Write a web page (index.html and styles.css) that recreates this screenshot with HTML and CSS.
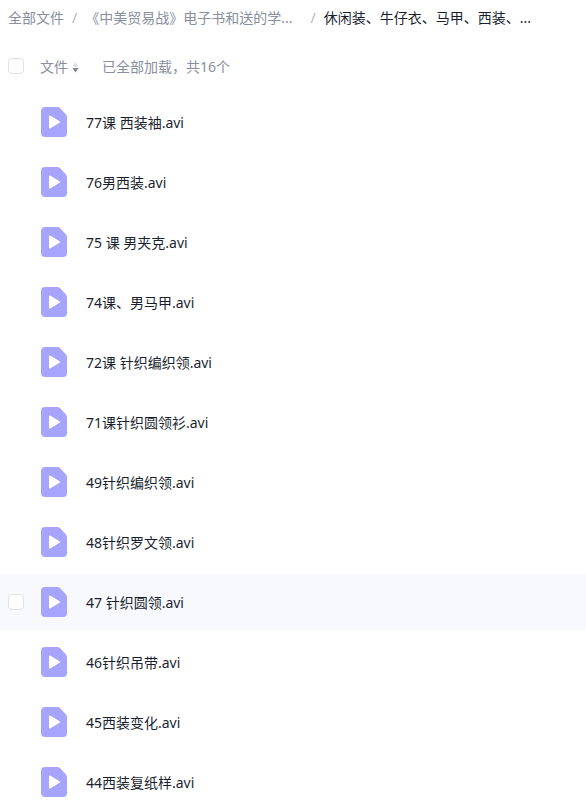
FILE: index.html

```html
<!DOCTYPE html>
<html lang="zh-CN">
<head>
    <meta charset="UTF-8">
    <title>全部文件</title>
    <link rel="stylesheet" href="styles.css">
</head>
<body>
    <svg class="defs" width="0" height="0">
        <symbol id="video" viewBox="0 0 26 30">
            <path d="M4 0 H16 Q18 0 19.4 1.4 L24.6 7 Q26 8.5 26 10.5 V26 Q26 30 22 30 H4 Q0 30 0 26 V4 Q0 0 4 0 Z" fill="#a6a4fd"/>
            <path d="M9 9.5 L18 15 L9 20.5 Z" fill="#fff" stroke="#fff" stroke-width="2" stroke-linejoin="round"/>
        </symbol>
    </svg>

    <nav class="crumbs">
        <span class="crumb crumb-root">全部文件</span>
        <span class="sep">/</span>
        <span class="crumb crumb-mid">《中美贸易战》电子书和送的学...</span>
        <span class="sep sep-last">/</span>
        <span class="crumb crumb-current">休闲装、牛仔衣、马甲、西装、...</span>
    </nav>

    <div class="list-head">
        <span class="check"></span>
        <span class="head-name">文件</span>
        <svg class="sort" width="7" height="11" viewBox="0 0 7 11">
            <path d="M3.5 0.5 L6.4 4.5 H0.6 Z" fill="#d5d8de"/>
            <path d="M3.5 10.5 L6.6 6 H0.4 Z" fill="#84878f"/>
        </svg>
        <span class="head-count">已全部加载，共16个</span>
    </div>

    <ul class="files">
        <li class="file">
            <svg class="file-icon"><use href="#video"/></svg>
            <span class="file-name">77课 西装袖.avi</span>
        </li>
        <li class="file">
            <svg class="file-icon"><use href="#video"/></svg>
            <span class="file-name">76男西装.avi</span>
        </li>
        <li class="file">
            <svg class="file-icon"><use href="#video"/></svg>
            <span class="file-name">75 课 男夹克.avi</span>
        </li>
        <li class="file">
            <svg class="file-icon"><use href="#video"/></svg>
            <span class="file-name">74课、男马甲.avi</span>
        </li>
        <li class="file">
            <svg class="file-icon"><use href="#video"/></svg>
            <span class="file-name">72课 针织编织领.avi</span>
        </li>
        <li class="file">
            <svg class="file-icon"><use href="#video"/></svg>
            <span class="file-name">71课针织圆领衫.avi</span>
        </li>
        <li class="file">
            <svg class="file-icon"><use href="#video"/></svg>
            <span class="file-name">49针织编织领.avi</span>
        </li>
        <li class="file">
            <svg class="file-icon"><use href="#video"/></svg>
            <span class="file-name">48针织罗文领.avi</span>
        </li>
        <li class="file file-hover">
            <span class="check"></span>
            <svg class="file-icon"><use href="#video"/></svg>
            <span class="file-name">47 针织圆领.avi</span>
        </li>
        <li class="file">
            <svg class="file-icon"><use href="#video"/></svg>
            <span class="file-name">46针织吊带.avi</span>
        </li>
        <li class="file">
            <svg class="file-icon"><use href="#video"/></svg>
            <span class="file-name">45西装变化.avi</span>
        </li>
        <li class="file">
            <svg class="file-icon"><use href="#video"/></svg>
            <span class="file-name">44西装复纸样.avi</span>
        </li>
    </ul>
</body>
</html>
```

FILE: styles.css

```css
html, body {
    height: 100%;
    overflow: hidden;
}
body {
    margin: 0;
    background: #fff;
    color: #1a1f30;
    font-family: "Noto Sans", "Noto Sans CJK SC", sans-serif;
    font-size: 14px;
}
.defs {
    display: block;
}
.crumbs {
    display: flex;
    align-items: center;
    height: 20px;
    padding: 7px 0 0 8px;
    color: #878e9d;
    white-space: nowrap;
}
.sep {
    margin: 0 8px 0 8px;
    color: #afb3bf;
}
.sep-last {
    margin: 0 8px 0 18px;
}
.crumb-current {
    color: #1a1f30;
}
.list-head {
    display: flex;
    align-items: center;
    height: 36px;
    margin-top: 21px;
    padding-left: 8px;
    color: #878e9d;
}
.check {
    box-sizing: border-box;
    width: 16px;
    height: 16px;
    border: 1px solid #dfe1e6;
    border-radius: 4px;
    background: #fff;
}
.head-name {
    margin-left: 16px;
}
.sort {
    margin: 3px 0 0 4px;
}
.head-count {
    margin-left: 23px;
}
.files {
    margin: 10px 0 0;
    padding: 0;
    list-style: none;
}
.file {
    display: flex;
    align-items: center;
    height: 56px;
    margin-top: 4px;
    padding-left: 41px;
    position: relative;
}
.files .file:first-child {
    margin-top: 0;
}
.file-hover {
    background: #f7f9fc;
}
.file-hover .check {
    position: absolute;
    left: 8px;
    top: 20px;
}
.file-icon {
    flex: none;
    width: 26px;
    height: 30px;
}
.file-name {
    margin-left: 19px;
}
```
